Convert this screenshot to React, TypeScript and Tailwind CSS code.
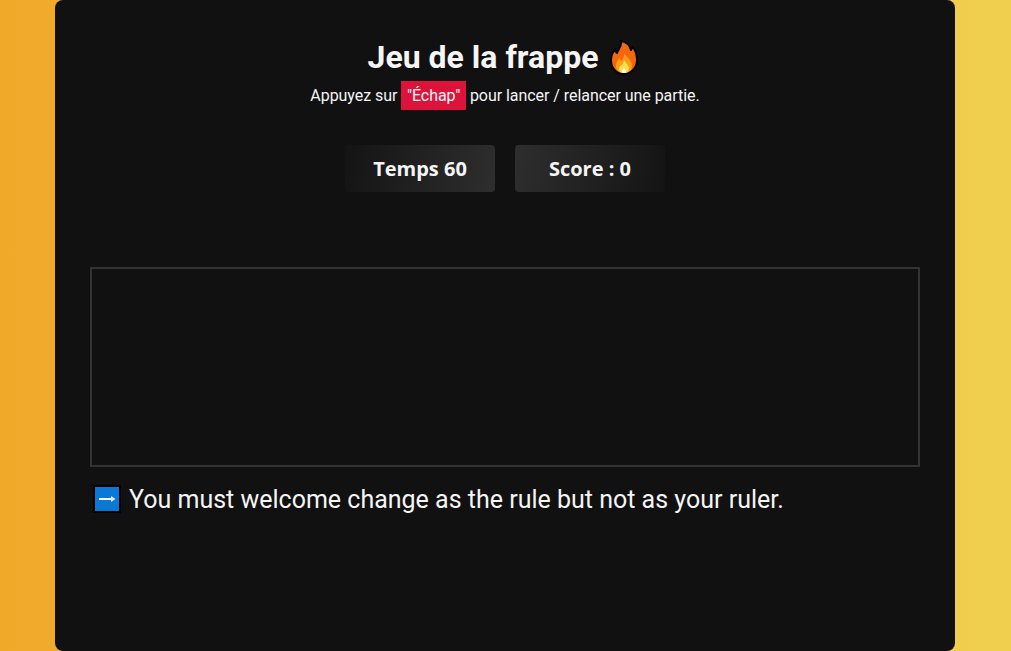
function FireIcon() {
  return (
    <svg width="32" height="35" viewBox="0 0 32 35" className="shrink-0">
      <path
        d="M11 1c5 1 9 4 10 9 .5-1 1-2 1.500-3 3 3 4.500 8 4.500 13 0 8-6 14-13.500 14S1 28 1 20c0-5 2-8 4-10.500.3 1.500.8 2.500 2 3.500 1-4 5-6 4-12z"
        fill="#f4670f"
        stroke="#000"
        strokeWidth="2"
        strokeLinejoin="round"
      />
      <path d="M14 13c0 3 8 6 8 13 0 4-3 7-8 7s-8-3-8-7c0-4 2-6 4-8 0 2 .5 3 1.500 3 2-2 3-5 2.500-8z" fill="#f9a01b" />
      <path d="M14 20c1 3 5 5 5 8.500 0 3-2 4.500-5 4.500s-5-1.500-5-4.500c0-2 2-3 3-3.500 1-1 2-3 2-5z" fill="#fde047" />
      <path d="M14 28c1 1 2 2 2 3 0 1-1 2-2 2s-2-1-2-2c0-1 1-2 2-3z" fill="#ffffff" />
    </svg>
  );
}

function ArrowIcon() {
  return (
    <svg width="29" height="28" viewBox="0 0 29 28" className="shrink-0 overflow-visible">
      <rect x="1" y="0" width="26" height="26" fill="#0a78d6" stroke="#000" strokeWidth="2" />
      <rect x="6" y="12" width="15" height="2" fill="#f5f5f5" />
      <path d="M18 10l4.500 3-4.500 3z" fill="#e8e8e8" />
    </svg>
  );
}

function Stat({ label, className }: { label: string; className: string }) {
  return (
    <div
      className={`flex h-[47px] w-[150px] items-center justify-center rounded font-['Open_Sans',sans-serif] text-[20px] font-bold text-[#f5f5f5] ${className}`}
    >
      {label}
    </div>
  );
}

export default function App() {
  return (
    <div className="h-[651px] overflow-hidden bg-[linear-gradient(90deg,#f1a92a,#f0cf4f)] pl-[55px]">
      <div className="flex h-[651px] w-[900px] flex-col items-center rounded-lg bg-[#111111] px-[35px] font-['Roboto',sans-serif] text-[#f5f5f5]">
        <h1 className="mt-[38px] flex h-[38px] items-center gap-[12px] text-[32px] font-bold">
          Jeu de la frappe
          <FireIcon />
        </h1>
        <p className="mt-[5px] flex items-center gap-1 text-[16px] leading-[29px] tracking-[-0.05px]">
          Appuyez sur
          <span className="bg-[#dc143c] px-[5.5px]">"Échap"</span>
          pour lancer / relancer une partie.
        </p>
        <div className="mt-[35px] flex gap-5">
          <Stat label="Temps 60" className="bg-[linear-gradient(100deg,#141414,#2e2e2e)]" />
          <Stat label="Score : 0" className="bg-[linear-gradient(100deg,#2e2e2e,#141414)]" />
        </div>
        <div className="mt-[75px] h-[200px] w-[830px] border-2 border-[#333333]" />
        <div className="mt-[18px] flex w-[830px] items-center gap-[7px] pl-[3px] text-[25px] leading-[30px] text-[#f5f5f5]">
          <ArrowIcon />
          You must welcome change as the rule but not as your ruler.
        </div>
      </div>
    </div>
  );
}
